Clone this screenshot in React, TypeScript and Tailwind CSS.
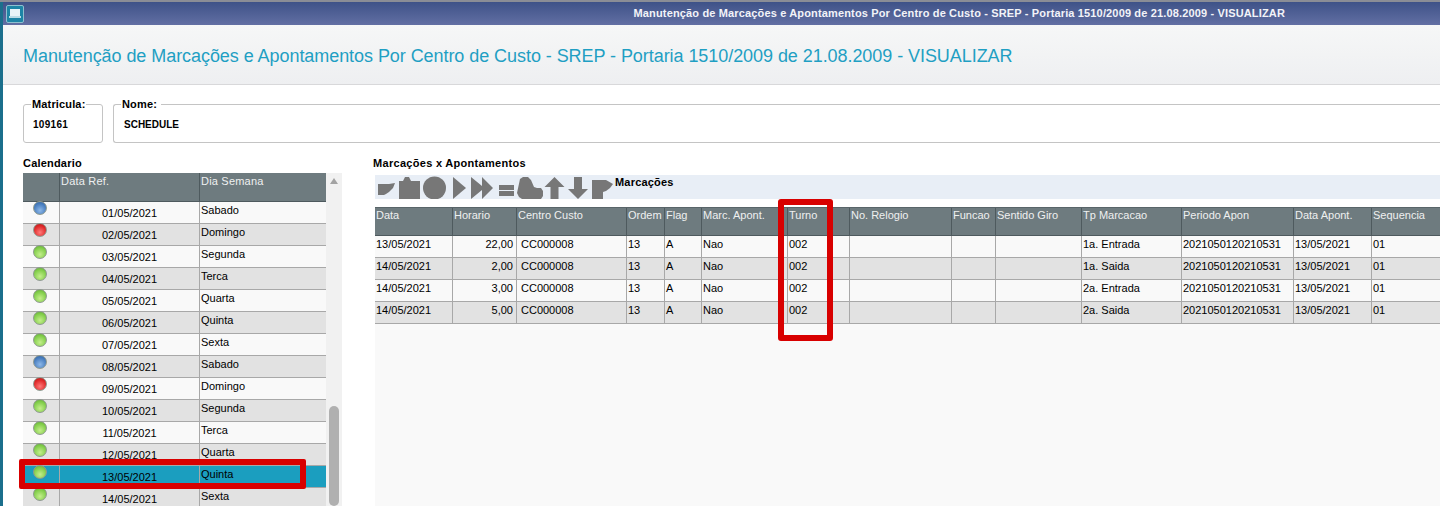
const calendar = [
  { ball: 'blue', date: '01/05/2021', day: 'Sabado' },
  { ball: 'red', date: '02/05/2021', day: 'Domingo' },
  { ball: 'green', date: '03/05/2021', day: 'Segunda' },
  { ball: 'green', date: '04/05/2021', day: 'Terca' },
  { ball: 'green', date: '05/05/2021', day: 'Quarta' },
  { ball: 'green', date: '06/05/2021', day: 'Quinta' },
  { ball: 'green', date: '07/05/2021', day: 'Sexta' },
  { ball: 'blue', date: '08/05/2021', day: 'Sabado' },
  { ball: 'red', date: '09/05/2021', day: 'Domingo' },
  { ball: 'green', date: '10/05/2021', day: 'Segunda' },
  { ball: 'green', date: '11/05/2021', day: 'Terca' },
  { ball: 'green', date: '12/05/2021', day: 'Quarta' },
  { ball: 'green', date: '13/05/2021', day: 'Quinta', selected: true },
  { ball: 'green', date: '14/05/2021', day: 'Sexta' },
]

const headers = ['Data', 'Horario', 'Centro Custo', 'Ordem', 'Flag', 'Marc. Apont.', 'Turno', 'No. Relogio', 'Funcao', 'Sentido Giro', 'Tp Marcacao', 'Periodo Apon', 'Data Apont.', 'Sequencia']

const marks = [
  { data: '13/05/2021', hora: '22,00', tipo: '1a. Entrada' },
  { data: '14/05/2021', hora: '2,00', tipo: '1a. Saida' },
  { data: '14/05/2021', hora: '3,00', tipo: '2a. Entrada' },
  { data: '14/05/2021', hora: '5,00', tipo: '2a. Saida' },
]

const ballColors: Record<string, string> = {
  blue: 'bg-[radial-gradient(circle_at_50%_70%,#8db8e8,#4a7fc0_60%,#2f5f9c)]',
  red: 'bg-[radial-gradient(circle_at_50%_70%,#ff7a7a,#e02a2a_60%,#a81818)]',
  green: 'bg-[radial-gradient(circle_at_50%_70%,#c4ee8c,#84cf4c_60%,#5ea832)]',
}

const gridCols = 'grid-cols-[78px_64px_110px_38px_37px_86px_62px_102px_44px_86px_100px_112px_78px_68px]'

function Ball({ color }: { color: string }) {
  return <div className={`mt-[-1px] h-[14px] w-[14px] rounded-full border border-[#8f9a90] ${ballColors[color]}`} />
}

function ToolbarIcons() {
  return (
    <svg width="240" height="24" viewBox="0 0 240 24" fill="#777777" className="shrink-0">
      {/* seta */}
      <path d="M3 9h11l6-1-2 5-4 4-3 2-2 1H3z" />
      {/* pasta */}
      <path d="M24 6h4l2-4h4l2 4h9v18H24z" />
      {/* circulo */}
      <circle cx="59.5" cy="13" r="11.5" />
      {/* play */}
      <path d="M78 2l13 11-13 11z" />
      {/* avancar */}
      <path d="M96 2l11 9V2l11 11-11 11v-9l-11 9z" />
      {/* igual */}
      <path d="M124 10h15v5h-15zM124 16h15v5h-15z" />
      {/* mao */}
      <path d="M145 4l3-2h5l3 3 3 7 3 1h4l2 3v5l-2 3h-19l-3-2-2-4z" />
      {/* cima */}
      <path d="M179.500 2l10 10h-6v12h-8V12h-6z" />
      {/* baixo */}
      <path d="M199 2h8v12h6l-10 10-10-10h6z" />
      {/* etiqueta */}
      <path d="M217 5h14l7 4-3 4-4 3-3 1v7h-11z" />
    </svg>
  )
}

export default function App() {
  return (
    <div className="relative flex h-[506px] w-[1440px] flex-col overflow-hidden bg-white font-['Liberation_Sans',Arial,sans-serif] text-[11px] text-black">
      {/* Barra de titulo */}
      <div className="h-[2px] shrink-0 bg-[#8a8d96]" />
      <div className="flex h-[23px] shrink-0 items-center border-l-[3px] border-[#1b6f8c] bg-gradient-to-b from-[#3e5288] to-[#626fa3] pr-[155px]">
        <div className="ml-[3px] flex h-[18px] w-[18px] items-center justify-center rounded-[2px] border border-[#8fc0cf] bg-[#1d85a6]">
          <svg width="12" height="11" viewBox="0 0 12 11">
            <rect x="1" y="1" width="10" height="7" fill="#e8f4f8" />
            <rect x="0" y="8" width="12" height="2" fill="#bcdce6" />
          </svg>
        </div>
        <div className="ml-auto font-bold tracking-[0.15px] text-[#f2f3f8]">
          Manutenção de Marcações e Apontamentos Por Centro de Custo - SREP - Portaria 1510/2009 de 21.08.2009 - VISUALIZAR
        </div>
      </div>

      <div className="flex min-h-0 flex-1 flex-col border-l-[3px] border-[#1b6f8c]">
        {/* Cabecalho */}
        <div className="flex h-[60px] shrink-0 items-center border-b border-[#d8d8da] bg-gradient-to-b from-[#f6f7f7] to-[#eeeff1] pt-[2px] pl-[20px]">
          <h1 className="text-[18px] leading-none font-normal tracking-[-0.06px] text-[#1f9fc3]">
            Manutenção de Marcações e Apontamentos Por Centro de Custo - SREP - Portaria 1510/2009 de 21.08.2009 - VISUALIZAR
          </h1>
        </div>

        {/* Matricula / Nome */}
        <div className="mt-[13px] flex shrink-0 gap-[10px] pl-[20px]">
          <fieldset className="h-[45px] w-[80px] shrink-0 rounded-[3px] border border-[#c4c4c4] pl-[7px]">
            <legend className="px-px text-[11px] leading-[13px] font-bold tracking-[0.15px]">Matricula:</legend>
            <div className="mt-[7px] ml-[2px] text-[10px] leading-[13px] font-bold tracking-[0.3px]">109161</div>
          </fieldset>
          <fieldset className="h-[45px] flex-1 rounded-l-[3px] border border-r-0 border-[#c4c4c4] pl-[7px]">
            <legend className="pr-1 pl-px text-[11px] leading-[13px] font-bold tracking-[0.15px]">Nome:</legend>
            <div className="mt-[7px] ml-[3px] text-[10px] leading-[13px] font-bold">SCHEDULE</div>
          </fieldset>
        </div>

        <div className="mt-[14px] flex min-h-0 flex-1">
          {/* Calendario */}
          <section className="ml-[20px] flex w-[320px] shrink-0 flex-col">
            <div className="h-[16px] shrink-0 leading-[13px] font-bold tracking-[0.2px]">Calendario</div>
            <div className="flex min-h-0 flex-1 overflow-hidden">
              <div className="w-[303px] shrink-0">
                <div className="grid h-[29px] grid-cols-[37px_140px_126px] border-b border-[#4e5a5e] bg-[#6e7b7f] leading-[13px] tracking-[0.2px] text-[#eef0f0]">
                  <div className="border-r border-[#4e5a5e]" />
                  <div className="border-r border-[#4e5a5e] pt-[2px] pl-[1px]">Data Ref.</div>
                  <div className="pt-[2px] pl-[1px]">Dia Semana</div>
                </div>
                {calendar.map((row, i) => (
                  <div
                    key={row.date}
                    className={`grid h-[22px] grid-cols-[37px_140px_126px] border-b border-[#a8a8a8] ${
                      row.selected ? 'bg-[#1b9ebf]' : i % 2 === 0 ? 'bg-[#f9f9f9]' : 'bg-[#e2e2e2]'
                    }`}
                  >
                    <div className="flex justify-center border-r border-[#a8a8a8] pr-[2px]">
                      <Ball color={row.ball} />
                    </div>
                    <div className="border-r border-[#a8a8a8] pt-[5px] text-center leading-[13px]">{row.date}</div>
                    <div className="pt-[2px] pl-[1px] leading-[13px]">{row.day}</div>
                  </div>
                ))}
              </div>
              <div className="flex w-[16px] shrink-0 flex-col items-center bg-[#f1f1f1]">
                <svg width="8" height="6" viewBox="0 0 8 6" className="mt-[5px]">
                  <path d="M4 0l4 6H0z" fill="#a3a3a3" />
                </svg>
                <div className="mt-[222px] h-[100px] w-[10px] shrink-0 rounded-[5px] bg-[#b0b0b0]" />
              </div>
            </div>
          </section>

          {/* Marcacoes x Apontamentos */}
          <section className="ml-[32px] flex min-w-0 flex-1 flex-col">
            <div className="ml-[-2px] h-[18px] shrink-0 leading-[13px] font-bold tracking-[0.3px]">Marcações x Apontamentos</div>
            <div className="flex h-[24px] shrink-0 items-start bg-[#e8eef6]">
              <ToolbarIcons />
              <span className="pt-[1px] leading-[13px] font-bold tracking-[0.2px]">Marcações</span>
            </div>
            <div className="mt-[8px] flex-1 bg-[#f9f9f9]">
              <div className={`grid h-[29px] ${gridCols} border-y border-[#4e5a5e] border-t-[#596569] bg-[#6e7b7f] leading-[13px] text-[#eef0f0]`}>
                {headers.map((h, i) => (
                  <div key={h} className={`pt-[1px] pl-[1px] ${i < headers.length - 1 ? 'border-r border-[#4e5a5e]' : ''}`}>
                    {h}
                  </div>
                ))}
              </div>
              {marks.map((m, i) => {
                const cells = [m.data, m.hora, 'CC000008', '13', 'A', 'Nao', '002', '', '', '', m.tipo, '2021050120210531', '13/05/2021', '01']
                return (
                  <div key={m.tipo} className={`grid h-[22px] ${gridCols} border-b border-[#a8a8a8] leading-[13px] ${i % 2 === 0 ? 'bg-[#f9f9f9]' : 'bg-[#e2e2e2]'}`}>
                    {cells.map((c, j) => (
                      <div
                        key={j}
                        className={`pt-[2px] ${j === 1 ? 'pr-[3px] text-right' : j === 2 ? 'pl-[4px]' : 'pl-[1px]'} ${j < cells.length - 1 ? 'border-r border-[#a8a8a8]' : ''}`}
                      >
                        {c}
                      </div>
                    ))}
                  </div>
                )
              })}
            </div>
          </section>
        </div>
      </div>

      {/* Destaques em vermelho */}
      <div className="absolute top-[459px] left-[19px] h-[30px] w-[287px] rounded-[2px] border-[6px] border-[#d80000]" />
      <div className="absolute top-[199px] left-[778px] h-[142px] w-[55px] rounded-[3px] border-[6px] border-[#d80000]" />
    </div>
  )
}
